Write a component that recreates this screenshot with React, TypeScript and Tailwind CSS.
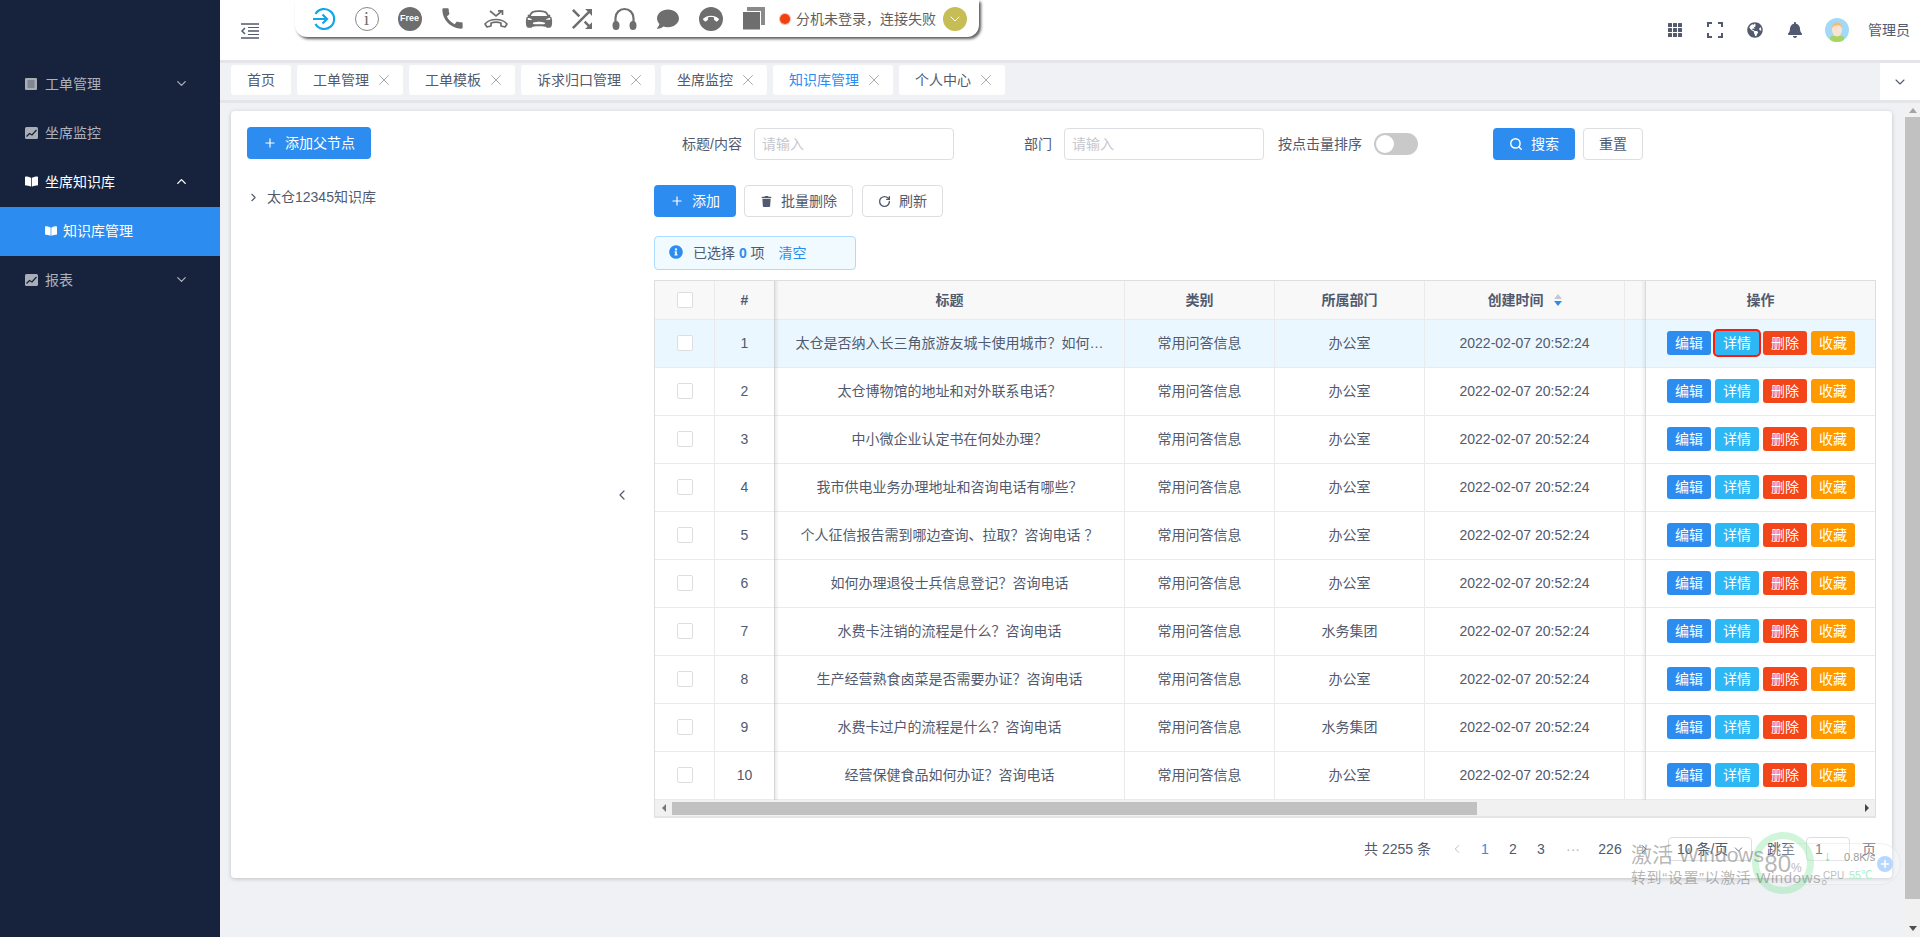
import { ChevronDown, ChevronUp, ChevronRight, ChevronLeft, Plus, X, Search, RotateCw } from 'lucide-react';
import { MdCall, MdShuffle, MdCallEnd } from 'react-icons/md';
import { IoCarSport } from 'react-icons/io5';
import { FaComment, FaBookOpen, FaTrash, FaGlobeAmericas, FaBell, FaInfoCircle } from 'react-icons/fa';

const rows = [
  { title: '太仓是否纳入长三角旅游友城卡使用城市？如何使用？', dept: '办公室' },
  { title: '太仓博物馆的地址和对外联系电话？', dept: '办公室' },
  { title: '中小微企业认定书在何处办理？', dept: '办公室' },
  { title: '我市供电业务办理地址和咨询电话有哪些？', dept: '办公室' },
  { title: '个人征信报告需到哪边查询、拉取？咨询电话 ？', dept: '办公室' },
  { title: '如何办理退役士兵信息登记？咨询电话', dept: '办公室' },
  { title: '水费卡注销的流程是什么？咨询电话', dept: '水务集团' },
  { title: '生产经营熟食卤菜是否需要办证？咨询电话', dept: '办公室' },
  { title: '水费卡过户的流程是什么？咨询电话', dept: '水务集团' },
  { title: '经营保健食品如何办证？咨询电话', dept: '办公室' },
];

const tabs = ['工单管理', '工单模板', '诉求归口管理', '坐席监控', '知识库管理', '个人中心'];

const gridCols = 'grid grid-cols-[60px_60px_350px_150px_150px_200px_21px_229px]';
const leftEdge = "after:absolute after:left-full after:top-0 after:-bottom-px after:w-[5px] after:bg-gradient-to-r after:from-[rgba(0,0,0,0.1)] after:to-transparent";
const rightEdge = "before:absolute before:right-full before:top-0 before:-bottom-px before:w-[5px] before:bg-gradient-to-l before:from-[rgba(0,0,0,0.08)] before:to-transparent";

const PaperIcon = () => (
  <svg width="12" height="12" viewBox="0 0 12 12">
    <rect width="12" height="12" rx="1" fill="#a9adb6" />
    <path d="M2.5 3h7M2.5 5h7M2.5 7h7M2.5 9h7" stroke="#5b6270" strokeWidth="1" />
  </svg>
);

const ChartIcon = () => (
  <svg width="13" height="12" viewBox="0 0 13 12">
    <rect width="13" height="12" rx="1.5" fill="#a9adb6" />
    <path d="M1.5 9.5 4.5 6.5 7 8 11.5 3" stroke="#17233d" strokeWidth="1.3" fill="none" />
  </svg>
);

const Avatar = () => (
  <svg width="24" height="24" viewBox="0 0 24 24">
    <clipPath id="avatar-clip"><circle cx="12" cy="12" r="12" /></clipPath>
    <g clipPath="url(#avatar-clip)">
      <rect width="24" height="24" fill="#a3d9f6" />
      <rect x="5" y="18" width="14" height="6" rx="2" fill="#a8d462" />
      <ellipse cx="12" cy="12" rx="5" ry="6.5" fill="#fbe3d2" />
      <path d="M7 10c0-4 2.500-5.500 5-5.500S17 6 17 10c-1.500-2-3-3-5-2.500-2 .5-3.500.5-5 2.500z" fill="#f5bc6c" />
    </g>
  </svg>
);

const SideItem = ({ icon, label, open, active, arrow }: { icon: React.ReactNode; label: string; open?: boolean; active?: boolean; arrow?: boolean }) => (
  <div className={`h-[49px] flex items-center pb-[2px] pl-[25px] pr-[31px] text-sm ${active ? 'text-white' : 'text-[#adb1ba]'}`}>
    <span className="w-[20px] flex items-center">{icon}</span>
    <span>{label}</span>
    {arrow && (
      <span className="ml-auto">
        {open ? <ChevronUp size={15} strokeWidth={2.2} /> : <ChevronDown size={15} strokeWidth={2} />}
      </span>
    )}
  </div>
);

const Checkbox = () => (
  <span className="w-4 h-4 rounded-[2px] border border-[#dcdee2] bg-white block" />
);

const ActionBtn = ({ label, color, marked }: { label: string; color: string; marked?: boolean }) => (
  <button className={`w-11 h-6 rounded-[3px] text-white text-sm leading-6 ${color} ${marked ? 'ring-2 ring-[#ff1a0e]' : ''}`}>{label}</button>
);

const Btn = ({ children, primary, className }: { children: React.ReactNode; primary?: boolean; className?: string }) => (
  <button
    className={`h-8 rounded text-sm flex items-center gap-2 ${primary ? 'px-4 bg-[#2d8cf0] text-white' : 'px-[15px] bg-white border border-[#dcdee2] text-[#515a6e]'} ${className ?? ''}`}
  >
    {children}
  </button>
);

const App = () => {
  return (
    <div className="relative h-screen w-full flex overflow-hidden bg-[#eff1f5] text-[#515a6e] font-['Liberation_Sans','Noto_Sans_CJK_SC',sans-serif]">
      {/* Sidebar */}
      <aside className="w-[220px] shrink-0 bg-[#17233d] pt-[60px]">
        <SideItem icon={<PaperIcon />} label="工单管理" arrow />
        <SideItem icon={<ChartIcon />} label="坐席监控" />
        <SideItem icon={<FaBookOpen size={13} color="#fff" />} label="坐席知识库" arrow open active />
        <div className="h-[49px] bg-[#2d8cf0] text-white text-sm flex items-center pb-[2px] pl-[45px] gap-[6px]">
          <FaBookOpen size={12} />
          <span>知识库管理</span>
        </div>
        <SideItem icon={<ChartIcon />} label="报表" arrow />
      </aside>

      <div className="flex-1 min-w-0 flex flex-col">
        {/* Header */}
        <header className="h-[63px] shrink-0 bg-white border-b-[3px] border-[#e3e5e9] flex items-start">
          <svg className="ml-[21px] mt-[22px]" width="18" height="18" viewBox="0 0 18 18" fill="none" stroke="#515a6e" strokeWidth="1.5">
            <path d="M0 2h18M7 9h11M0 16h18" />
            <path d="M4 6 1 9l3 3" />
            <path d="M7 5.500h11M7 12.500h11" strokeWidth="1" />
          </svg>
          <div className="ml-[36px] w-[684px] h-[37px] bg-white rounded-b-[12px] shadow-[2px_2px_3px_rgba(0,0,0,0.65)] flex items-center pl-[7px] text-[#6e6e6e]">
            <div className="w-[43px] flex justify-center">
              <svg width="24" height="24" viewBox="0 0 24 24" fill="none" stroke="#12a5ea" strokeWidth="2.2">
                <path d="M3.500 7A10 10 0 1 1 3.500 17" />
                <path d="M1 12h14M10.500 7.500 15 12l-4.500 4.500" />
              </svg>
            </div>
            <div className="w-[43px] flex justify-center">
              <span className="w-6 h-6 rounded-full border border-[#888] flex items-center justify-center text-[18px] leading-none font-['Liberation_Serif',serif]">i</span>
            </div>
            <div className="w-[43px] flex justify-center">
              <span className="w-6 h-6 rounded-full bg-[#6e6e6e] text-white text-[9px] font-bold flex items-center justify-center">Free</span>
            </div>
            <div className="w-[43px] flex justify-center"><MdCall size={27} /></div>
            <div className="w-[43px] flex justify-center">
              <svg width="24" height="18" viewBox="0 0 24 18" fill="none" stroke="#6e6e6e" strokeWidth="1.7">
                <path d="M1 14c5-6 17-6 22 0l-2 3-4-1v-3c-3-1-7-1-10 0v3l-4 1z" strokeLinejoin="round" />
                <path d="M6 1l6 5 6-5" />
                <path d="M14 .8h4.500V5" />
              </svg>
            </div>
            <div className="w-[43px] flex justify-center"><IoCarSport size={28} /></div>
            <div className="w-[43px] flex justify-center"><MdShuffle size={30} /></div>
            <div className="w-[43px] flex justify-center">
              <svg width="25" height="24" viewBox="0 0 25 24" fill="#6e6e6e">
                <path d="M3.500 17v-6a9 9 0 0 1 18 0v6" fill="none" stroke="#6e6e6e" strokeWidth="2.2" />
                <ellipse cx="4" cy="18.500" rx="3.500" ry="4.500" />
                <ellipse cx="21" cy="18.500" rx="3.500" ry="4.500" />
              </svg>
            </div>
            <div className="w-[43px] flex justify-center"><FaComment size={22} /></div>
            <div className="w-[43px] flex justify-center">
              <span className="w-6 h-6 rounded-full bg-[#6e6e6e] flex items-center justify-center"><MdCallEnd size={16} color="#fff" /></span>
            </div>
            <div className="w-[43px] flex justify-center">
              <svg width="23" height="23" viewBox="0 0 23 23">
                <rect x="5" y="0" width="18" height="18" fill="#8a8a8a" />
                <rect x="0.500" y="4.500" width="18" height="18.500" fill="#6e6e6e" stroke="#fff" strokeWidth="1" />
              </svg>
            </div>
            <span className="ml-[5px] w-[10px] h-[10px] rounded-full bg-[#f0410f] ring-1 ring-[#f9b5a5]" />
            <span className="ml-[6px] text-sm text-[#5f5f5f] whitespace-nowrap">分机未登录，连接失败</span>
            <span className="ml-[7px] w-6 h-6 rounded-full bg-[#c7bd55] flex items-center justify-center"><ChevronDown size={16} color="#fff" strokeWidth={1.5} /></span>
          </div>
          <div className="ml-auto h-[60px] flex items-center pr-[10px]">
            <svg className="mr-[24px]" width="16" height="16" viewBox="0 0 16 16" fill="#515a6e">
              <rect x="1" y="1" width="4" height="4" rx=".5" /><rect x="6" y="1" width="4" height="4" rx=".5" /><rect x="11" y="1" width="4" height="4" rx=".5" />
              <rect x="1" y="6" width="4" height="4" rx=".5" /><rect x="6" y="6" width="4" height="4" rx=".5" /><rect x="11" y="6" width="4" height="4" rx=".5" />
              <rect x="1" y="11" width="4" height="4" rx=".5" /><rect x="6" y="11" width="4" height="4" rx=".5" /><rect x="11" y="11" width="4" height="4" rx=".5" />
            </svg>
            <svg className="mr-[24px]" width="16" height="16" viewBox="0 0 16 16" fill="none" stroke="#515a6e" strokeWidth="2">
              <path d="M1 5V1h4M11 1h4v4M15 11v4h-4M5 15H1v-4" />
            </svg>
            <FaGlobeAmericas className="mr-[24px]" size={16} color="#515a6e" />
            <FaBell className="mr-[22px]" size={16} color="#515a6e" />
            <Avatar />
            <span className="ml-[19px] text-sm">管理员</span>
          </div>
        </header>

        {/* Tabs */}
        <div className="h-[40px] shrink-0 flex items-start bg-[#eff1f5] border-b-[3px] border-[#e3e5e9]">
          <div className="flex-1 flex gap-[6px] pl-[11px] pt-[2px]">
            <div className="h-[30px] px-4 bg-white rounded-[3px] text-sm flex items-center">首页</div>
            {tabs.map((tab) => (
              <div key={tab} className={`h-[30px] pl-4 pr-[10px] bg-white rounded-[3px] text-sm flex items-center gap-[6px] ${tab === '知识库管理' ? 'text-[#2d8cf0]' : ''}`}>
                {tab}
                <X size={18} strokeWidth={1.1} color="#999" />
              </div>
            ))}
          </div>
          <div className="w-10 h-[37px] bg-white flex items-center justify-center">
            <ChevronDown size={16} strokeWidth={1.6} />
          </div>
        </div>

        <div className="flex-1 min-h-0 flex">
          <main className="flex-1 min-w-0 pl-[11px] pr-[13px] pt-[8px]">
            {/* Card */}
            <div className="h-[767px] bg-white rounded-[4px] shadow-[0_1px_4px_rgba(0,0,0,0.2)] flex">
              {/* Tree */}
              <div className="w-[423px] shrink-0 flex pl-4 pt-4">
                <div className="w-[367px]">
                  <Btn primary className="w-[124px]"><Plus size={14} strokeWidth={2} />添加父节点</Btn>
                  <div className="mt-[28px] flex items-center gap-[7px] text-sm">
                    <ChevronRight size={13} strokeWidth={2} />
                    <span>太仓12345知识库</span>
                  </div>
                </div>
                <div className="self-center -mt-4">
                  <ChevronLeft size={16} strokeWidth={1.8} />
                </div>
              </div>

              {/* Right pane */}
              <div className="w-[1222px] pt-[17px]">
                <div className="flex items-center text-sm">
                  <label className="w-[88px] text-right">标题/内容</label>
                  <input placeholder="请输入" className="ml-3 w-[200px] h-8 px-[7px] border border-[#dcdee2] rounded text-sm placeholder:text-[#c5c8ce]" />
                  <label className="w-[98px] text-right">部门</label>
                  <input placeholder="请输入" className="ml-3 w-[200px] h-8 px-[7px] border border-[#dcdee2] rounded text-sm placeholder:text-[#c5c8ce]" />
                  <label className="w-[98px] text-right">按点击量排序</label>
                  <span className="ml-3 w-11 h-[22px] rounded-full bg-[#c9c9c9] p-[2px] block">
                    <span className="w-[18px] h-[18px] rounded-full bg-white block" />
                  </span>
                  <Btn primary className="ml-[75px]"><Search size={14} strokeWidth={2.5} />搜索</Btn>
                  <Btn className="ml-2">重置</Btn>
                </div>

                <div className="mt-[25px] flex gap-2">
                  <Btn primary><Plus size={14} strokeWidth={2} />添加</Btn>
                  <Btn><FaTrash size={11} className="mx-px" />批量删除</Btn>
                  <Btn className="ml-px"><RotateCw size={13} strokeWidth={2.5} />刷新</Btn>
                </div>

                <div className="mt-[19px] w-[202px] h-[34px] bg-[#f0faff] border border-[#abdcff] rounded flex items-center pl-[14px] text-sm">
                  <FaInfoCircle size={14} color="#2d8cf0" className="-mt-[3px]" />
                  <span className="ml-[10px]">已选择 <b className="text-[#2d8cf0]">0</b> 项</span>
                  <span className="ml-[14px] text-[#2d8cf0]">清空</span>
                </div>

                {/* Table */}
                <div className="mt-[10px] border border-[#dcdee2] border-b-2 border-b-[#e3e5e9] text-sm">
                  <div className={`${gridCols} h-[39px] bg-[#f8f8f9] font-bold border-b border-[#e8eaec]`}>
                    <div className="flex items-center justify-center border-r border-[#e8eaec]"><Checkbox /></div>
                    <div className={`relative z-10 flex items-center justify-center bg-[#f8f8f9] border-r border-[#e8eaec] ${leftEdge}`}>#</div>
                    <div className="flex items-center justify-center border-r border-[#e8eaec]">标题</div>
                    <div className="flex items-center justify-center border-r border-[#e8eaec]">类别</div>
                    <div className="flex items-center justify-center border-r border-[#e8eaec]">所属部门</div>
                    <div className="flex items-center justify-center gap-[10px] border-r border-[#e8eaec]">
                      创建时间
                      <svg width="8" height="12" viewBox="0 0 8 12">
                        <path d="M4 0 8 5H0z" fill="#c5c8ce" />
                        <path d="M4 12 8 7H0z" fill="#2d8cf0" />
                      </svg>
                    </div>
                    <div className="border-r border-[#e8eaec]" />
                    <div className={`relative z-10 flex items-center justify-center bg-[#f8f8f9] ${rightEdge}`}>操作</div>
                  </div>

                  {rows.map((row, i) => (
                    <div key={i} className={`${gridCols} h-12 border-b border-[#e8eaec] ${i === 0 ? 'bg-[#ebf7ff]' : 'bg-white'}`}>
                      <div className="flex items-center justify-center pb-px border-r border-[#e8eaec]"><Checkbox /></div>
                      <div className={`relative z-10 flex items-center justify-center pb-px border-r border-[#e8eaec] ${leftEdge} ${i === 0 ? 'bg-[#ebf7ff]' : 'bg-white'}`}>{i + 1}</div>
                      <div className="flex items-center justify-center pb-px border-r border-[#e8eaec] min-w-0">
                        <span className="truncate max-w-[308px]">{row.title}</span>
                      </div>
                      <div className="flex items-center justify-center pb-px border-r border-[#e8eaec]">常用问答信息</div>
                      <div className="flex items-center justify-center pb-px border-r border-[#e8eaec]">{row.dept}</div>
                      <div className="flex items-center justify-center pb-px border-r border-[#e8eaec]">2022-02-07 20:52:24</div>
                      <div className="border-r border-[#e8eaec]" />
                      <div className={`relative z-10 flex items-center justify-center gap-1 pl-[1px] pb-px ${rightEdge} ${i === 0 ? 'bg-[#ebf7ff]' : 'bg-white'}`}>
                        <ActionBtn label="编辑" color="bg-[#2d8cf0]" />
                        <ActionBtn label="详情" color="bg-[#2db7f5]" marked={i === 0} />
                        <ActionBtn label="删除" color="bg-[#f2451a]" />
                        <ActionBtn label="收藏" color="bg-[#ff9900]" />
                      </div>
                    </div>
                  ))}

                  {/* horizontal scrollbar */}
                  <div className="h-[16px] bg-[#f1f1f1] flex items-center">
                    <div className="w-[17px] flex justify-center">
                      <span className="w-0 h-0 border-y-[4px] border-y-transparent border-r-[4px] border-r-[#777]" />
                    </div>
                    <div className="w-[805px] h-[13px] bg-[#c1c1c1]" />
                    <div className="ml-auto w-[17px] flex justify-center">
                      <span className="w-0 h-0 border-y-[4px] border-y-transparent border-l-[4px] border-l-[#444]" />
                    </div>
                  </div>
                </div>

                {/* Pagination */}
                <div className="mt-[19px] h-6 flex items-center justify-end text-sm">
                  <span>共 2255 条</span>
                  <span className="ml-[12px] w-[28px] flex justify-center text-[#b5b9c0]"><ChevronLeft size={14} strokeWidth={1.6} /></span>
                  <span className="w-[28px] text-center text-[#2d8cf0]">1</span>
                  <span className="w-[28px] text-center">2</span>
                  <span className="w-[28px] text-center">3</span>
                  <span className="w-[36px] text-center text-[#b5b9c0]">···</span>
                  <span className="w-[38px] text-center">226</span>
                  <span className="w-[30px] flex justify-center"><ChevronRight size={14} strokeWidth={1.6} /></span>
                  <div className="ml-[9px] w-[84px] h-6 border border-[#dcdee2] rounded flex items-center justify-between pl-[8px] pr-[6px]">
                    <span>10 条/页</span>
                    <ChevronDown size={13} strokeWidth={1.6} />
                  </div>
                  <span className="ml-[15px]">跳至</span>
                  <div className="ml-[11px] w-[44px] h-6 border border-[#dcdee2] rounded flex items-center pl-[8px]">1</div>
                  <span className="ml-3">页</span>
                </div>
              </div>
            </div>
          </main>

          {/* Page scrollbar */}
          <div className="w-[15px] shrink-0 bg-[#f1f1f1] flex flex-col items-center">
            <div className="h-[14px] flex items-center">
              <span className="w-0 h-0 border-x-[4px] border-x-transparent border-b-[5px] border-b-[#a3a3a3]" />
            </div>
            <div className="w-full h-[782px] bg-[#c1c1c1]" />
            <div className="flex-1 flex items-end pb-[6px]">
              <span className="w-0 h-0 border-x-[4px] border-x-transparent border-t-[5px] border-t-[#505050]" />
            </div>
          </div>
        </div>
      </div>

      {/* Float widget */}
      <div className="absolute left-[1770px] top-[843px] w-[131px] h-[42px] rounded-full border border-[rgba(200,200,200,0.25)] bg-[rgba(255,255,255,0.25)] pointer-events-none">
        <span className="absolute left-[53px] top-[2px] text-[14px] text-[#7edc9c]">↓</span>
        <span className="absolute left-[73px] top-[5px] text-[11px] text-[rgba(110,110,110,0.7)]">0.8K/s</span>
        <span className="absolute left-[52px] top-[23px] text-[10px] text-[rgba(120,120,120,0.5)]">CPU <span className="ml-[2px] text-[11px] text-[#a8efc4]">55℃</span></span>
        <span className="absolute left-[106px] top-[12px] w-4 h-4 rounded-full bg-[#b6d7ff] text-white flex items-center justify-center"><Plus size={12} strokeWidth={3} /></span>
      </div>
      <div className="absolute left-[1752px] top-[832px] w-[62px] h-[62px] rounded-full border-[7px] border-[rgba(120,225,150,0.35)] flex items-center justify-center pt-[2px] text-[rgba(110,110,110,0.5)] text-[24px] pointer-events-none">
        80<span className="text-xs mt-2">%</span>
      </div>

      {/* Activation watermark */}
      <div className="absolute left-[1631px] top-[842px] text-[rgba(120,120,120,0.55)] pointer-events-none whitespace-nowrap">
        <div className="text-[21px] leading-[26px]">激活 Windows</div>
        <div className="text-[15px] tracking-[0.6px] leading-5">转到“设置”以激活 Windows。</div>
      </div>
    </div>
  );
};

export default App;
